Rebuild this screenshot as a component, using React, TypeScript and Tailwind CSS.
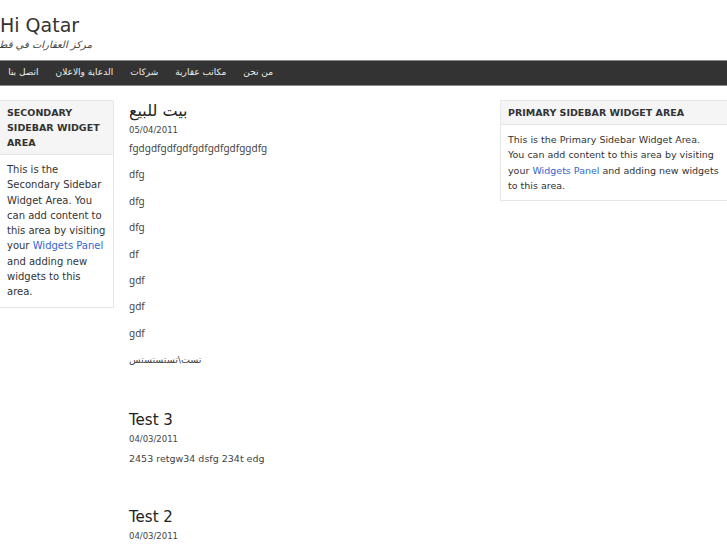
import React from 'react';

const navItems = ['من نحن', 'مكاتب عقارية', 'شركات', 'الدعاية والاعلان', 'اتصل بنا'];

const firstPost = [
  'fgdgdfgdfgdfgdfgdfgdfggdfg',
  'dfg',
  'dfg',
  'dfg',
  'df',
  'gdf',
  'gdf',
  'gdf',
];

const Widget: React.FC<{ title: string; children: React.ReactNode; className?: string }> = ({ title, children, className }) => (
  <div className={`border border-[#e6e6e6] bg-white ${className ?? ''}`}>
    <h3 className="bg-[#f5f5f5] border-b border-[#e6e6e6] px-[7px] py-[4px] text-[9.5px] leading-[15px] font-bold uppercase text-[#333]">
      {title}
    </h3>
    {children}
  </div>
);

const App: React.FC = () => {
  return (
    <div className="w-[727px] h-[545px] overflow-hidden bg-white text-[#333] font-['DejaVu_Sans',sans-serif]">
      <header className="h-[60px] pt-[14px]">
        <h1 className="text-[19px] leading-[22px] font-normal text-[#333]">Hi Qatar</h1>
        <p dir="rtl" className="w-[92px] mt-[2px] whitespace-nowrap text-[10px] leading-[14px] italic text-[#444]">
          مركز العقارات في قطر
        </p>
      </header>

      <nav className="h-[26px] bg-[#333] border-y border-[#8a8a8a]">
        <ul dir="rtl" className="flex w-[282px] h-full items-center pr-[9px] gap-[17px] text-[9px] text-[#eee]">
          {navItems.map((item) => (
            <li key={item} className="whitespace-nowrap">{item}</li>
          ))}
        </ul>
      </nav>

      <div className="flex pt-[14px]">
        <aside className="w-[114px] shrink-0">
          <Widget title="Secondary Sidebar Widget Area" className="border-l-0">
            <p className="px-[7px] py-[7px] text-[10px] leading-[15.3px] text-[#333]">
              This is the Secondary Sidebar Widget Area. You can add content to this area by visiting your{' '}
              <a href="#" className="text-[#3366cc]">Widgets Panel</a> and adding new widgets to this area.
            </p>
          </Widget>
        </aside>

        <main className="ml-[15px] w-[340px] shrink-0">
          <article>
            <h2 className="text-[16px] leading-[22px] text-[#222]">بيت للبيع</h2>
            <div className="mt-[1px] text-[8.5px] leading-[14px] text-[#444]">05/04/2011</div>
            <div className="mt-[4px] text-[10px] leading-[15px] text-[#444] font-['Noto_Sans',sans-serif]">
              {firstPost.map((line, i) => (
                <p key={i} className="mb-[11.4px]">{line}</p>
              ))}
              <p className="mb-[11.4px] font-['DejaVu_Sans',sans-serif] text-[9.5px]">تست\تستستستس</p>
            </div>
          </article>

          <article className="mt-[42px]">
            <h2 className="text-[15px] leading-[22px] text-[#222]">Test 3</h2>
            <div className="mt-[1px] text-[8.5px] leading-[14px] text-[#444]">04/03/2011</div>
            <p className="mt-[5px] text-[9.5px] leading-[15px] text-[#444]">2453 retgw34 dsfg 234t edg</p>
          </article>

          <article className="mt-[40px]">
            <h2 className="text-[15px] leading-[22px] text-[#222]">Test 2</h2>
            <div className="mt-[1px] text-[8.5px] leading-[14px] text-[#444]">04/03/2011</div>
          </article>
        </main>

        <aside className="ml-auto w-[227px] shrink-0">
          <Widget title="Primary Sidebar Widget Area" className="border-r-0">
            <p className="pl-[7px] pr-[3px] py-[7px] text-[9.5px] leading-[15.3px] text-[#333]">
              This is the Primary Sidebar Widget Area.
              <br />
              You can add content to this area by visiting your{' '}
              <a href="#" className="text-[#3366cc]">Widgets Panel</a> and adding new widgets to this area.
            </p>
          </Widget>
        </aside>
      </div>
    </div>
  );
};

export default App;
